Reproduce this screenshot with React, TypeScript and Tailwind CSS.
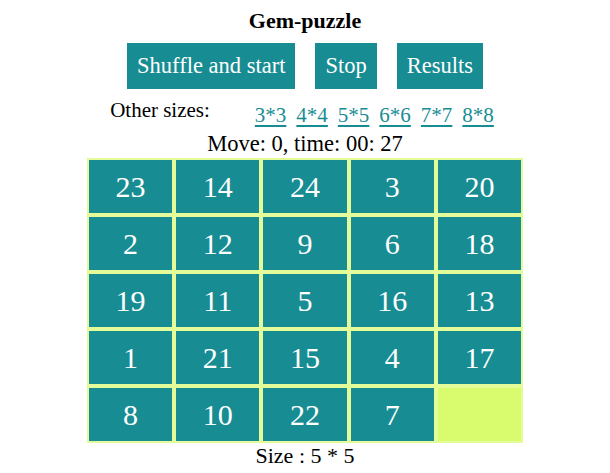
const tiles: (number | null)[] = [
  23, 14, 24, 3, 20,
  2, 12, 9, 6, 18,
  19, 11, 5, 16, 13,
  1, 21, 15, 4, 17,
  8, 10, 22, 7, null,
];

const sizes = ["3*3", "4*4", "5*5", "6*6", "7*7", "8*8"];

export default function App() {
  return (
    <div className="flex flex-col items-center bg-white text-black font-['Liberation_Serif',serif] w-[610px] h-[473px]">
      <h1 className="text-[22px] font-bold leading-[25px] mt-[8px]">Gem-puzzle</h1>
      <div className="flex gap-[20px] mt-[10px]">
        <button className="h-[46px] px-[10px] bg-[#178d93] text-white text-[22.5px]">Shuffle and start</button>
        <button className="h-[46px] px-[10px] bg-[#178d93] text-white text-[22.5px]">Stop</button>
        <button className="h-[46px] px-[10px] bg-[#178d93] text-white text-[22.5px]">Results</button>
      </div>
      <div className="flex items-start mt-[9px] ml-[-6px]">
        <span className="text-[21px] leading-[24px]">Other sizes:</span>
        <div className="flex gap-[10px] ml-[45px] mt-[5px]">
          {sizes.map((s) => (
            <a key={s} href="#" className="text-[21px] leading-[24px] text-[#178d93] underline underline-offset-[3px]">
              {s}
            </a>
          ))}
        </div>
      </div>
      <p className="text-[22.5px] leading-[25px] mt-[4px]">Move: 0, time: 00: 27</p>
      <div className="grid grid-cols-5 gap-[4px] p-[2px] w-[436px] mt-[2px] bg-[#e4fb9a]">
        {tiles.map((t, i) =>
          t === null ? (
            <div key={i} className="h-[53px] bg-[#d9fb6e]" />
          ) : (
            <div key={i} className="h-[53px] bg-[#178d93] text-white text-[30px] flex items-center justify-center">
              {t}
            </div>
          )
        )}
      </div>
      <p className="text-[22px] leading-[25px]">Size : 5 * 5</p>
    </div>
  );
}
